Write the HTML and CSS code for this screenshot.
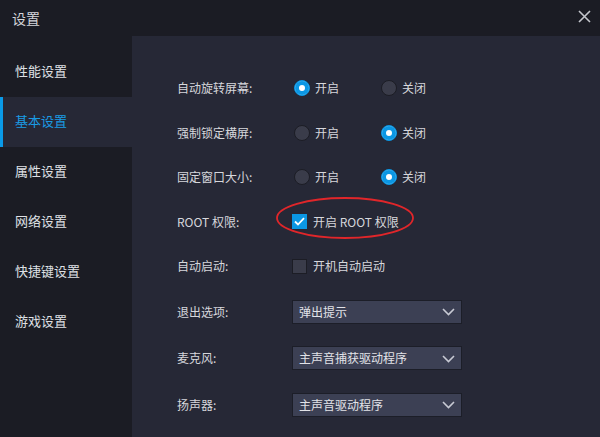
FILE: index.html
```html
<!DOCTYPE html>
<html lang="zh-CN">
<head>
<meta charset="utf-8">
<title>设置</title>
<link rel="stylesheet" href="styles.css">
</head>
<body>
<div class="window">
  <header class="titlebar">
    <span class="title">设置</span>
    <svg class="close" width="13" height="13" viewBox="0 0 13 13"><path d="M1 1L12 12M12 1L1 12" stroke="#c4c6cc" stroke-width="1.6" fill="none"/></svg>
  </header>
  <div class="main">
    <nav class="sidebar">
      <div class="nav-item">性能设置</div>
      <div class="nav-item active">基本设置</div>
      <div class="nav-item">属性设置</div>
      <div class="nav-item">网络设置</div>
      <div class="nav-item">快捷键设置</div>
      <div class="nav-item">游戏设置</div>
    </nav>
    <section class="content">
      <div class="row">
        <div class="label">自动旋转屏幕:</div>
        <div class="opt"><span class="radio on"></span>开启</div>
        <div class="opt"><span class="radio"></span>关闭</div>
      </div>
      <div class="row">
        <div class="label">强制锁定横屏:</div>
        <div class="opt"><span class="radio"></span>开启</div>
        <div class="opt"><span class="radio on"></span>关闭</div>
      </div>
      <div class="row">
        <div class="label">固定窗口大小:</div>
        <div class="opt"><span class="radio"></span>开启</div>
        <div class="opt"><span class="radio on"></span>关闭</div>
      </div>
      <div class="row">
        <div class="label">ROOT 权限:</div>
        <div class="check-wrap">
          <span class="checkbox on"><svg width="11" height="9" viewBox="0 0 11 9"><path d="M1 4.5L4 7.5L10 1.2" stroke="#fff" stroke-width="1.8" fill="none"/></svg></span>开启 ROOT 权限
          <svg class="ellipse" width="140" height="44" viewBox="0 0 140 44"><ellipse cx="70" cy="22" rx="68" ry="20" stroke="#e0262a" stroke-width="1.8" fill="none"/></svg>
        </div>
      </div>
      <div class="row">
        <div class="label">自动启动:</div>
        <div class="check-wrap"><span class="checkbox"></span>开机自动启动</div>
      </div>
      <div class="row tall">
        <div class="label">退出选项:</div>
        <div class="select"><span>弹出提示</span><svg width="13" height="8" viewBox="0 0 13 8"><path d="M1 1L6.5 6.5L12 1" stroke="#c8cad4" stroke-width="1.6" fill="none"/></svg></div>
      </div>
      <div class="row tall">
        <div class="label">麦克风:</div>
        <div class="select"><span>主声音捕获驱动程序</span><svg width="13" height="8" viewBox="0 0 13 8"><path d="M1 1L6.5 6.5L12 1" stroke="#c8cad4" stroke-width="1.6" fill="none"/></svg></div>
      </div>
      <div class="row tall">
        <div class="label">扬声器:</div>
        <div class="select"><span>主声音驱动程序</span><svg width="13" height="8" viewBox="0 0 13 8"><path d="M1 1L6.5 6.5L12 1" stroke="#c8cad4" stroke-width="1.6" fill="none"/></svg></div>
      </div>
    </section>
  </div>
</div>
</body>
</html>
```

FILE: styles.css
```css
* { box-sizing: border-box; }
html, body {
  margin: 0;
  padding: 0;
  width: 600px;
  height: 437px;
  overflow: hidden;
  background: #1b1c24;
  font-family: "Noto Sans CJK SC", "Microsoft YaHei", sans-serif;
}
.window {
  width: 600px;
  height: 437px;
  display: flex;
  flex-direction: column;
}
.titlebar {
  height: 36px;
  flex: none;
  display: flex;
  align-items: center;
  justify-content: space-between;
  padding: 0 9px 0 12px;
  background: #1b1c24;
}
.title {
  color: #d4d5da;
  font-size: 14px;
  line-height: 1;
  margin-top: -1px;
}
.close { display: block; margin-top: -3px; }
.main {
  flex: 1;
  display: flex;
  min-height: 0;
}
.sidebar {
  width: 132px;
  flex: none;
  padding-top: 11px;
  background: #1b1c24;
}
.nav-item {
  height: 50px;
  display: flex;
  align-items: center;
  padding: 0 0 4px 15px;
  font-size: 13px;
  color: #dfe0e4;
}
.nav-item.active {
  background: #262836;
  color: #1a9be4;
  box-shadow: inset 3px 0 0 #0a9ae8;
}
.content {
  flex: 1;
  background: #262836;
  padding: 30px 0 0 45px;
}
.row {
  height: 44.5px;
  display: flex;
  align-items: center;
  font-size: 12px;
  line-height: 16px;
  color: #d6d7dc;
}
.row.tall { height: 46.5px; }
.label {
  width: 115px;
  flex: none;
}
.opt {
  width: 87px;
  display: flex;
  align-items: center;
  padding-left: 2px;
}
.radio {
  width: 16px;
  height: 16px;
  border-radius: 50%;
  background: #3a3c4a;
  border: 1px solid #1c1d25;
  margin-right: 5px;
  flex: none;
}
.radio.on {
  background: #0b97e4;
  border-color: #0b97e4;
  box-shadow: inset 0 0 0 4px #0b97e4, inset 0 0 0 8px #fff;
}
.check-wrap {
  position: relative;
  display: flex;
  align-items: center;
}
.checkbox {
  width: 15px;
  height: 15px;
  background: #3a3c4a;
  border: 1px solid #1c1d25;
  margin-right: 6px;
  display: flex;
  align-items: center;
  justify-content: center;
  flex: none;
}
.checkbox.on {
  background: #0b97e4;
  border-color: #0b97e4;
}
.ellipse {
  position: absolute;
  left: -17px;
  top: -18px;
}
.select {
  width: 170px;
  height: 24px;
  display: flex;
  align-items: center;
  justify-content: space-between;
  padding: 0 6px 0 6px;
  background: #3c4054;
  border: 1px solid #1c1e28;
  color: #e2e3e8;
}
.select svg { margin-top: 1px; }
```
